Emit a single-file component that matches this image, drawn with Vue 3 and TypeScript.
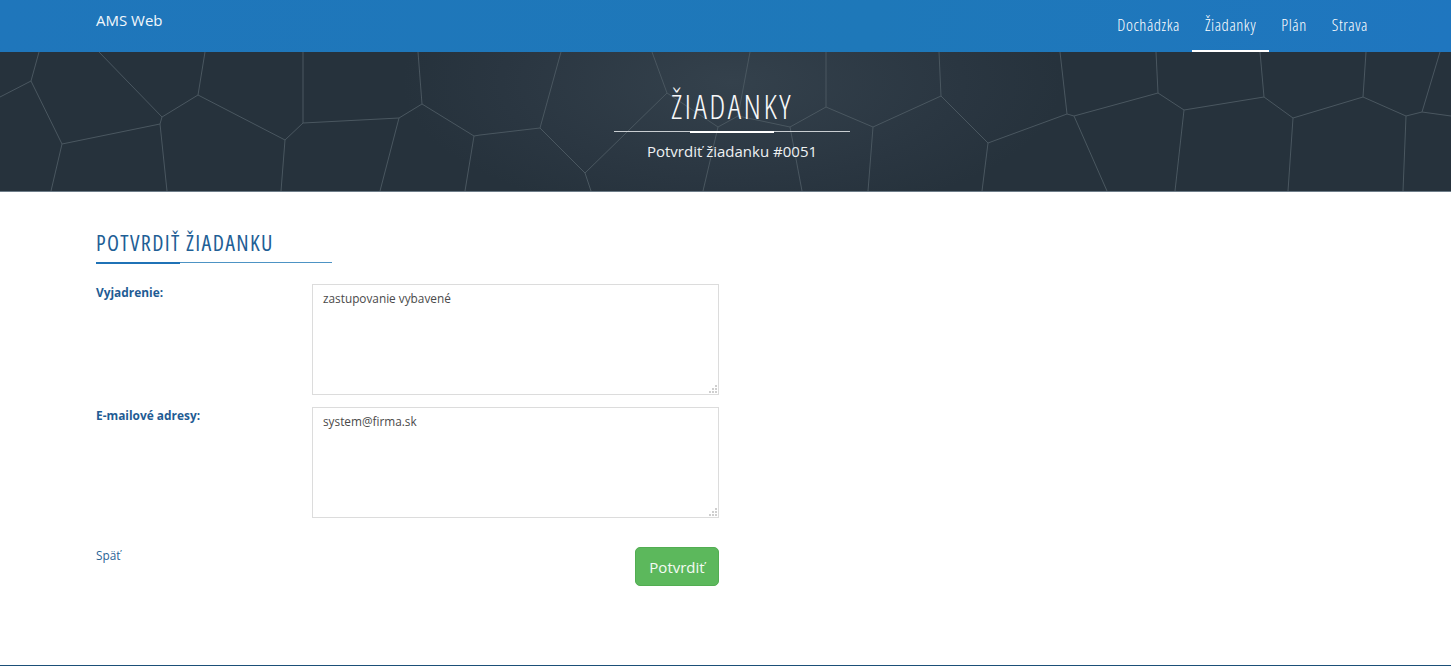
<script setup lang="ts">
const navItems = [
  { label: 'Dochádzka', active: false },
  { label: 'Žiadanky', active: true },
  { label: 'Plán', active: false },
  { label: 'Strava', active: false },
]
const cracks: string =
  'M39 52L31 81L0 97M31 81L62 144L51 191M62 144L160 124L167 191M160 124L162 117L99 52M162 117L198 95L205 52M198 95L285 140L281 191M285 140L303 123L303 52M303 123L399 118L422 104L418 52M399 118L380 191M422 104L474 136L465 191M474 136L480 135L540 128L561 52M540 128L585 173L591 191M585 173L667 93L652 52M667 93L718 127L703 191M718 127L738 116L790 127L802 191M738 116L750 52M790 127L826 107L826 52M826 107L873 127L868 191M873 127L941 96L939 52M941 96L988 143L982 191M988 143L1067 114L1060 52M1067 114L1074 116L1107 191M1074 116L1158 93L1156 52M1158 93L1184 110L1175 191M1184 110L1264 97L1260 52M1264 97L1293 118L1288 191M1293 118L1363 97L1366 52M1363 97L1406 116L1403 191M1406 116L1422 112L1440 52M1422 112L1451 116'
const gripDots: [number, number][] = [[6, 0], [6, 3], [3, 3], [6, 6], [3, 6], [0, 6]]
</script>

<template>
  <div class="page">
    <header class="navbar">
      <a class="brand">AMS Web</a>
      <nav class="nav">
        <a v-for="item in navItems" :key="item.label" class="nav-link" :class="{ active: item.active }">{{ item.label }}</a>
      </nav>
    </header>

    <section class="hero">
      <svg class="cracks" viewBox="0 52 1451 140" width="1451" height="140" aria-hidden="true">
        <path :d="cracks" fill="none" stroke="#4a5760" stroke-width="1" />
      </svg>
      <div class="hero-inner">
        <h1 class="hero-title">ŽIADANKY</h1>
        <div class="hero-rule"><span></span></div>
        <p class="hero-sub">Potvrdiť žiadanku #0051</p>
      </div>
    </section>

    <main class="content">
      <h2 class="section-title">POTVRDIŤ ŽIADANKU</h2>
      <div class="section-rule"><span></span></div>

      <form class="form" @submit.prevent>
        <label class="label">Vyjadrenie:</label>
        <div class="field-wrap">
          <textarea class="field">zastupovanie vybavené</textarea>
          <svg class="grip" width="8" height="8" viewBox="0 0 8 8" aria-hidden="true">
            <rect v-for="d in gripDots" :key="d.join()" :x="d[0]" :y="d[1]" width="2" height="2" fill="#cfcfcf" />
          </svg>
        </div>
        <label class="label">E-mailové adresy:</label>
        <div class="field-wrap">
          <textarea class="field">system@firma.sk</textarea>
          <svg class="grip" width="8" height="8" viewBox="0 0 8 8" aria-hidden="true">
            <rect v-for="d in gripDots" :key="d.join()" :x="d[0]" :y="d[1]" width="2" height="2" fill="#cfcfcf" />
          </svg>
        </div>
        <div class="actions">
          <a class="back">Späť</a>
          <button class="submit" type="submit">Potvrdiť</button>
        </div>
      </form>
    </main>
  </div>
</template>

<style>
html, body { margin: 0; background: #fff; overflow: hidden; }
</style>

<style scoped>
.page {
  height: 666px;
  box-sizing: border-box;
  border-bottom: 1px solid #1b4f78;
  font-family: "Open Sans", "Liberation Sans", sans-serif;
  font-size: 12px;
  color: #444;
  overflow: hidden;
}
.navbar {
  height: 52px;
  box-sizing: border-box;
  padding: 0 83px 0 96px;
  display: flex;
  justify-content: space-between;
  background: linear-gradient(100deg, #1f76bb 0%, #1e78b9 60%, #1f76bf 100%);
}
.brand {
  color: #f2f7fb;
  font-size: 15px;
  line-height: 20px;
  margin-top: 10px;
}
.nav { display: flex; }
.nav-link {
  color: #fff;
  font-family: "Open Sans", sans-serif;
  font-stretch: 75%;
  font-weight: 300;
  font-size: 16.5px;
  letter-spacing: 0.55px;
  line-height: 50px;
  padding: 0 12.5px;
  box-sizing: border-box;
  height: 52px;
}
.nav-link:last-child { padding-right: 0; }
.nav-link.active { border-bottom: 2px solid #fff; }
.hero {
  position: relative;
  height: 140px;
  box-sizing: border-box;
  border-bottom: 1px solid #6d7c88;
  background: radial-gradient(ellipse 330px 140px at 732px 30px, #34414c 0%, #2a3641 70%, #26323c 100%);
  overflow: hidden;
}
.cracks { position: absolute; left: 0; top: 0; display: block; }
.hero-inner {
  position: relative;
  padding: 31px 83px 0 96px;
  display: flex;
  flex-direction: column;
  align-items: center;
}
.hero-title {
  margin: 0;
  color: #f7f8f9;
  font-family: "Open Sans", sans-serif;
  font-stretch: 75%;
  font-weight: 300;
  font-size: 33px;
  letter-spacing: 2.4px;
  line-height: 47px;
}
.hero-rule {
  width: 236px;
  height: 1px;
  margin-top: 1px;
  background: #c9ced2;
  display: flex;
  justify-content: center;
}
.hero-rule span { width: 84px; height: 2px; background: #fff; }
.hero-sub {
  margin: 10px 0 0;
  color: #eef1f3;
  font-size: 15px;
  line-height: 19px;
}
.content { padding: 38px 0 0 96px; }
.section-title {
  margin: 0;
  color: #1f5f96;
  font-family: "Open Sans", sans-serif;
  font-stretch: 75%;
  font-weight: 400;
  font-size: 22px;
  letter-spacing: 1.35px;
  line-height: 24px;
}
.section-rule {
  width: 236px;
  height: 1px;
  margin-top: 8px;
  background: #4d93c4;
}
.section-rule span { display: block; width: 84px; height: 2px; background: #1f72b6; }
.form {
  width: 623px;
  margin-top: 21px;
  display: grid;
  grid-template-columns: 216px 407px;
  row-gap: 12px;
}
.label {
  color: #1f5c94;
  font-weight: 700;
  font-size: 11.9px;
  line-height: 17px;
}
.field-wrap { position: relative; height: 111px; }
.grip { position: absolute; right: 2px; bottom: 2px; }
.field {
  display: block;
  width: 407px;
  height: 111px;
  box-sizing: border-box;
  margin: 0;
  padding: 5px 10px;
  border: 1px solid #dcdcdc;
  border-radius: 0;
  outline: none;
  resize: none;
  color: #4a4a4a;
  font-family: "Open Sans", "Liberation Sans", sans-serif;
  font-size: 11.8px;
  line-height: 17px;
  background: #fff;
}
.actions {
  grid-column: 1 / -1;
  display: flex;
  justify-content: space-between;
  align-items: flex-start;
  margin-top: 17px;
}
.back {
  color: #2a6496;
  font-size: 11.8px;
  line-height: 17px;
}
.submit {
  width: 84px;
  height: 39px;
  box-sizing: border-box;
  border: 1px solid #52ad52;
  border-radius: 5px;
  background: #5cb85c;
  color: #f4fbf4;
  font-family: "Open Sans", "Liberation Sans", sans-serif;
  font-size: 15px;
  padding: 0;
}
</style>
